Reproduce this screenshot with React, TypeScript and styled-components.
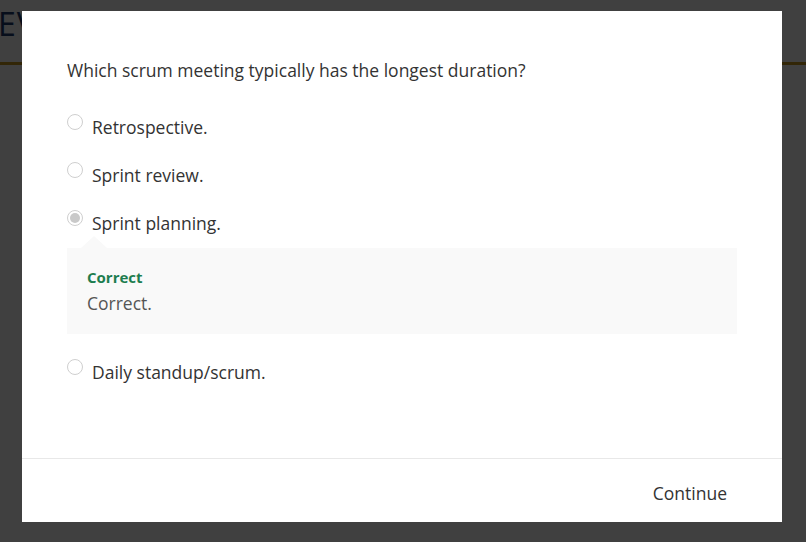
import React from 'react';
import styled, { createGlobalStyle } from 'styled-components';

const GlobalStyle = createGlobalStyle`
  html, body {
    margin: 0;
    padding: 0;
    width: 100%;
    height: 100%;
    overflow: hidden;
  }
  body {
    font-family: 'Open Sans', 'Liberation Sans', sans-serif;
    background: #ffffff;
  }
`;

const Page = styled.div`
  height: 542px;
  background: #ffffff;
`;

const PageHeader = styled.header`
  height: 62px;
  border-bottom: 3px solid #c8961e;
  display: flex;
  align-items: flex-start;
`;

const Brand = styled.div`
  font-size: 32px;
  line-height: 1;
  color: #1f3a6e;
  padding: 8px 0 0 0;
  margin-left: -2px;
  letter-spacing: 1px;
`;

const Overlay = styled.div`
  position: fixed;
  inset: 0;
  background: rgba(0, 0, 0, 0.75);
  display: flex;
  justify-content: flex-start;
  align-items: flex-start;
  padding: 11px 0 0 22px;
`;

const Modal = styled.div`
  width: 760px;
  height: 511px;
  background: #ffffff;
  display: flex;
  flex-direction: column;
`;

const Body = styled.div`
  flex: 1;
  padding: 47px 45px 0 45px;
`;

const Question = styled.p`
  margin: 0 0 33px 0;
  font-size: 17.5px;
  line-height: 24px;
  color: #333333;
`;

const OptionList = styled.div`
  display: flex;
  flex-direction: column;
`;

const Option = styled.label`
  display: flex;
  align-items: flex-start;
  gap: 9px;
  font-size: 17.5px;
  line-height: 24px;
  color: #333333;
  padding: 0 0 24px 0;
`;

const Radio = styled.span<{ $checked?: boolean }>`
  flex: none;
  width: 16px;
  height: 16px;
  margin-top: -1px;
  border-radius: 50%;
  border: 1px solid #cfcfcf;
  box-sizing: border-box;
  background: #ffffff;
  display: flex;
  align-items: center;
  justify-content: center;
  &::after {
    content: '';
    width: 10px;
    height: 10px;
    border-radius: 50%;
    background: ${({ $checked }) => ($checked ? '#c9c9c9' : 'transparent')};
  }
`;

const Feedback = styled.div`
  position: relative;
  background: #f9f9f9;
  margin: -11px 0 26px 0;
  padding: 19px 20px 19px 20px;
  &::before {
    content: '';
    position: absolute;
    top: -12px;
    left: 14px;
    border-left: 13px solid transparent;
    border-right: 13px solid transparent;
    border-bottom: 12px solid #f9f9f9;
  }
`;

const FeedbackTitle = styled.div`
  font-size: 15px;
  font-weight: 700;
  line-height: 20px;
  color: #1e7d4f;
`;

const FeedbackText = styled.div`
  font-size: 17.5px;
  line-height: 24px;
  color: #555555;
  margin-top: 4px;
`;

const Footer = styled.div`
  border-top: 1px solid #e8e8e8;
  height: 63px;
  display: flex;
  align-items: center;
  justify-content: flex-end;
  padding-right: 55px;
`;

const ContinueButton = styled.button`
  border: none;
  background: transparent;
  font-family: inherit;
  font-size: 17.5px;
  color: #333333;
  padding: 0;
  margin-top: 4px;
  cursor: pointer;
`;

const options = [
  { text: 'Retrospective.' },
  { text: 'Sprint review.' },
  { text: 'Sprint planning.', checked: true, feedback: 'Correct.' },
  { text: 'Daily standup/scrum.' },
];

export default function App() {
  return (
    <>
      <GlobalStyle />
      <Page>
        <PageHeader>
          <Brand>EV</Brand>
        </PageHeader>
      </Page>
      <Overlay>
        <Modal>
          <Body>
            <Question>Which scrum meeting typically has the longest duration?</Question>
            <OptionList>
              {options.map((o) => (
                <React.Fragment key={o.text}>
                  <Option>
                    <Radio $checked={o.checked} />
                    <span>{o.text}</span>
                  </Option>
                  {o.feedback && (
                    <Feedback>
                      <FeedbackTitle>Correct</FeedbackTitle>
                      <FeedbackText>{o.feedback}</FeedbackText>
                    </Feedback>
                  )}
                </React.Fragment>
              ))}
            </OptionList>
          </Body>
          <Footer>
            <ContinueButton>Continue</ContinueButton>
          </Footer>
        </Modal>
      </Overlay>
    </>
  );
}
